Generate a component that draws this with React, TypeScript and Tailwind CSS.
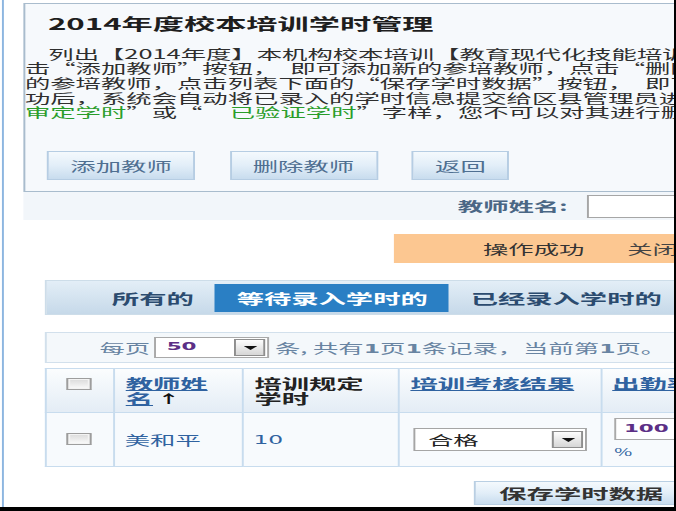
import React from "react";

// The page was captured stretched sideways, so it is laid out at its natural
// width and widened with a single horizontal scale.

function DropButton() {
  return (
    <span className="flex h-[17px] w-[16px] shrink-0 items-center justify-center border border-[#8e8e8e] bg-linear-to-b from-[#fdfdfd] to-[#d6d6d6]">
      <svg width="7" height="4" viewBox="0 0 7 4">
        <path d="M0 0h7L3.5 4z" fill="#111" />
      </svg>
    </span>
  );
}

function CheckBox() {
  return (
    <span className="inline-block h-[12px] w-[13px] border border-[#9d9d9d] bg-linear-to-b from-[#dadada] to-[#fbfbfb] shadow-[inset_0_0_0_1px_#f3f3f3]" />
  );
}

function ActionButton({ label }: { label: string }) {
  return (
    <button className="flex h-[29px] items-center border border-[#b6cde3] bg-linear-to-b from-[#f4f9fd] via-[#e2eef8] to-[#c8dcee] px-[11px] text-[13px] text-[#4f6f91]">
      {label}
    </button>
  );
}

export default function App() {
  return (
    <div className="h-[511px] w-[676px] overflow-hidden border-r-2 border-b-4 border-black bg-white">
      <div className="h-full w-[346px] origin-top-left scale-x-[1.95] font-['Noto_Sans_CJK_SC',sans-serif]">
        <div className="ml-[1.4px] h-full border-l border-[#8db6e0] pt-[3px] pl-[9.4px]">
          {/* intro panel */}
          <div className="h-[189px] w-[380px] border border-[#a9bccd] bg-[#f6f9fc]">
            <h1 className="pt-[9px] pl-[11.8px] text-[16px] leading-[20px] font-bold text-[#1e1e1e]">
              2014年度校本培训学时管理
            </h1>
            <p className="mt-[13.6px] indent-[12px] text-[13px] leading-[14.7px] whitespace-nowrap text-[#2e2e2e]">
              列出【2014年度】本机构校本培训【教育现代化技能培训】
              <br />
              击“添加教师”按钮，<span className="inline-block w-[6px]" />即可添加新的参培教师，点击“删除
              <br />
              的参培教师，点击列表下面的“保存学时数据”按钮，<span className="inline-block w-[6px]" />即可
              <br />
              功后，系统会自动将已录入的学时信息提交给区县管理员进行
              <br />
              <span className="text-[#2a9d2a]">审定学时</span>”或“<span className="inline-block w-[14px]" />
              <span className="text-[#2a9d2a]">已验证学时</span>”字样，您不可以对其进行删除
            </p>
            <div className="mt-[30.9px] ml-[11.3px] flex gap-[17.5px]">
              <ActionButton label="添加教师" />
              <ActionButton label="删除教师" />
              <ActionButton label="返回" />
            </div>
          </div>

          {/* search band */}
          <div className="flex h-[28px] w-[380px] items-center bg-[#f2f6fa] pl-[223px]">
            <span className="text-[13px] font-bold text-[#4b6785]">教师姓名:</span>
            <span className="ml-[10px] h-[23px] w-[80px] border border-[#a6a6a6] bg-white" />
          </div>

          {/* notice */}
          <div className="mt-[14px] ml-[190.2px] flex h-[29px] w-[170px] items-center bg-[#fcc791] pl-[45.7px] text-[13px] text-[#333]">
            <span>操作成功</span>
            <span className="ml-[22px] text-[#444]">关闭</span>
          </div>

          <div className="ml-[11.2px]">
            {/* tabs */}
            <div className="mt-[17px] flex h-[35px] w-[360px] items-stretch border border-[#cddde9] bg-linear-to-b from-[#e3eef7] to-[#c6d9e9] pt-[3px] pb-[2px] pl-[22.4px] text-[14px] font-bold">
              <span className="flex items-center px-[11px] text-[#2b4b6f]">所有的</span>
              <span className="flex items-center bg-[#2a7fc4] px-[11px] text-white">等待录入学时的</span>
              <span className="flex items-center px-[11px] text-[#2b4b6f]">已经录入学时的</span>
            </div>

            {/* paging */}
            <div className="mt-[17px] flex h-[31px] w-[360px] items-center border border-[#d2e0ec] bg-[#f4f8fb] pl-[27px] text-[13px] text-[#6884a2]">
              <span>每页</span>
              <span className="ml-[2.5px] flex h-[21px] w-[59px] items-center border border-[#a9a9a9] bg-white pr-[1px]">
                <span className="flex-1 pl-[5px] font-['DejaVu_Sans',sans-serif] text-[11px] font-bold text-[#5c2f86]">50</span>
                <DropButton />
              </span>
              <span className="ml-[2.5px]">
                条, 共有<b className="font-['DejaVu_Sans',sans-serif] text-[12px]">1</b>页
                <b className="font-['DejaVu_Sans',sans-serif] text-[12px]">1</b>条记录，当前第
                <b className="font-['DejaVu_Sans',sans-serif] text-[12px]">1</b>页。
              </span>
            </div>

            {/* teacher table */}
            <table className="mt-[5px] w-[350px] table-fixed border-collapse">
              <colgroup>
                <col className="w-[35px]" />
                <col className="w-[66px]" />
                <col className="w-[80.5px]" />
                <col className="w-[103.5px]" />
                <col className="w-[65px]" />
              </colgroup>
              <thead>
                <tr className="h-[44px] bg-linear-to-b from-[#fbfdfe] to-[#e3ecf5] text-left text-[14px] leading-[15px] font-bold">
                  <th className="border border-[#c8dcee] pt-[8px] text-center align-top">
                    <CheckBox />
                  </th>
                  <th className="border border-[#c8dcee] px-[5.5px] pt-[7px] align-top text-[#2f62a0]">
                    <span className="underline">教师姓</span>
                    <br />
                    <span className="underline">名</span>
                    <span className="ml-[2px] text-[12px] text-[#111]">↑</span>
                  </th>
                  <th className="border border-[#c8dcee] px-[5.5px] pt-[7px] align-top text-[#222]">
                    培训规定
                    <br />
                    学时
                  </th>
                  <th className="border border-[#c8dcee] px-[5px] pt-[7px] align-top text-[#2f62a0] underline">
                    培训考核结果
                  </th>
                  <th className="border border-[#c8dcee] px-[5px] pt-[7px] align-top whitespace-nowrap text-[#2f62a0] underline">
                    出勤率
                  </th>
                </tr>
              </thead>
              <tbody>
                <tr className="h-[54px] bg-[#f7fafd] text-[13px]">
                  <td className="border border-[#c8dcee] text-center align-middle">
                    <CheckBox />
                  </td>
                  <td className="border border-[#c8dcee] px-[5px] align-middle text-[#2f62a0]">美和平</td>
                  <td className="border border-[#c8dcee] px-[5px] align-middle font-['DejaVu_Sans',sans-serif] text-[12px] text-[#2f62a0]">
                    10
                  </td>
                  <td className="border border-[#c8dcee] pl-[7px] align-middle">
                    <span className="flex h-[23px] w-[89px] items-center border border-[#a5a5a5] bg-white pr-[1px]">
                      <span className="flex-1 pl-[6px] text-[#222]">合格</span>
                      <DropButton />
                    </span>
                  </td>
                  <td className="border border-[#c8dcee] pt-[5px] pl-[6px] align-top">
                    <span className="flex h-[22px] w-[60px] items-center border border-[#a9a9a9] bg-white pl-[4px] font-['DejaVu_Sans',sans-serif] text-[11px] font-bold text-[#5c2f86]">
                      100
                    </span>
                    <span className="mt-[6px] block text-[10px] leading-[12px] text-[#2f62a0]">%</span>
                  </td>
                </tr>
              </tbody>
            </table>

            <button className="mt-[14px] ml-[219.6px] flex h-[24px] w-[112px] items-center border border-[#b9cfe3] bg-linear-to-b from-[#f4f9fd] via-[#e2eef8] to-[#c8dcee] pl-[12.5px] text-[14px] font-bold whitespace-nowrap text-[#333]">
              保存学时数据
            </button>
          </div>
        </div>
      </div>
    </div>
  );
}
